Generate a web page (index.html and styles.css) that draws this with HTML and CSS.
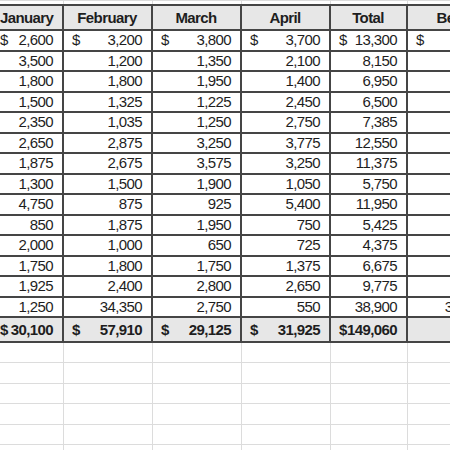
FILE: index.html
```html
<!DOCTYPE html>
<html lang="en">
<head>
    <meta charset="UTF-8">
    <meta name="viewport" content="width=device-width, initial-scale=1.0">
    <title>Monthly Expenses</title>
    <link rel="stylesheet" href="styles.css">
</head>
<body>
    <table class="sheet">
        <colgroup>
            <col class="c-jan">
            <col class="c-month">
            <col class="c-month">
            <col class="c-month">
            <col class="c-total">
            <col class="c-best">
        </colgroup>
        <tr class="blank top"><td></td><td></td><td></td><td></td><td></td><td></td></tr>
        <tr class="head">
            <th>January</th><th>February</th><th>March</th><th>April</th><th>Total</th><th>Best</th>
        </tr>
        <tr class="row">
            <td><span class="cur">$</span>2,600</td>
            <td><span class="cur">$</span>3,200</td>
            <td><span class="cur">$</span>3,800</td>
            <td><span class="cur">$</span>3,700</td>
            <td><span class="cur">$</span>13,300</td>
            <td><span class="cur">$</span>3,800</td>
        </tr>
        <tr class="row"><td>3,500</td><td>1,200</td><td>1,350</td><td>2,100</td><td>8,150</td><td>3,500</td></tr>
        <tr class="row"><td>1,800</td><td>1,800</td><td>1,950</td><td>1,400</td><td>6,950</td><td>1,950</td></tr>
        <tr class="row"><td>1,500</td><td>1,325</td><td>1,225</td><td>2,450</td><td>6,500</td><td>2,450</td></tr>
        <tr class="row"><td>2,350</td><td>1,035</td><td>1,250</td><td>2,750</td><td>7,385</td><td>2,750</td></tr>
        <tr class="row"><td>2,650</td><td>2,875</td><td>3,250</td><td>3,775</td><td>12,550</td><td>3,775</td></tr>
        <tr class="row"><td>1,875</td><td>2,675</td><td>3,575</td><td>3,250</td><td>11,375</td><td>3,575</td></tr>
        <tr class="row"><td>1,300</td><td>1,500</td><td>1,900</td><td>1,050</td><td>5,750</td><td>1,900</td></tr>
        <tr class="row"><td>4,750</td><td>875</td><td>925</td><td>5,400</td><td>11,950</td><td>5,400</td></tr>
        <tr class="row"><td>850</td><td>1,875</td><td>1,950</td><td>750</td><td>5,425</td><td>1,950</td></tr>
        <tr class="row"><td>2,000</td><td>1,000</td><td>650</td><td>725</td><td>4,375</td><td>2,000</td></tr>
        <tr class="row"><td>1,750</td><td>1,800</td><td>1,750</td><td>1,375</td><td>6,675</td><td>1,800</td></tr>
        <tr class="row"><td>1,925</td><td>2,400</td><td>2,800</td><td>2,650</td><td>9,775</td><td>2,800</td></tr>
        <tr class="row"><td>1,250</td><td>34,350</td><td>2,750</td><td>550</td><td>38,900</td><td>34,350</td></tr>
        <tr class="sum">
            <td><span class="cur">$</span>30,100</td>
            <td><span class="cur">$</span>57,910</td>
            <td><span class="cur">$</span>29,125</td>
            <td><span class="cur">$</span>31,925</td>
            <td><span class="cur">$</span>149,060</td>
            <td></td>
        </tr>
        <tr class="blank"><td></td><td></td><td></td><td></td><td></td><td></td></tr>
        <tr class="blank"><td></td><td></td><td></td><td></td><td></td><td></td></tr>
        <tr class="blank"><td></td><td></td><td></td><td></td><td></td><td></td></tr>
        <tr class="blank"><td></td><td></td><td></td><td></td><td></td><td></td></tr>
        <tr class="blank"><td></td><td></td><td></td><td></td><td></td><td></td></tr>
        <tr class="blank"><td></td><td></td><td></td><td></td><td></td><td></td></tr>
    </table>
</body>
</html>
```

FILE: styles.css
```css
body {
    margin: 0;
    background: #ffffff;
    overflow: hidden;
    font-family: "Liberation Sans", Arial, sans-serif;
    font-size: 15px;
    letter-spacing: -0.6px;
    color: #1e1e1e;
}
.sheet {
    border-collapse: collapse;
    table-layout: fixed;
    width: 506px;
    margin-left: -10px;
}
.c-jan {
    width: 72px;
}
.c-month {
    width: 89px;
}
.c-total {
    width: 77px;
}
.c-best {
    width: 90px;
}
.sheet td,
.sheet th {
    border: 1px solid #dcdcdc;
    padding: 0 9px 0 8px;
    line-height: 16px;
    white-space: nowrap;
    overflow: hidden;
}
.blank td {
    height: 19.4px;
}
.blank.top td {
    height: 3px;
}
.head th,
.row td,
.sum td {
    border: 2px solid #454545;
}
.head th {
    height: 23px;
    background: #e7e7e7;
    font-weight: bold;
    text-align: center;
}
.row td {
    height: 18.5px;
    text-align: right;
}
.sum td {
    height: 23px;
    background: #e7e7e7;
    font-weight: bold;
    text-align: right;
}
.cur {
    float: left;
}
```
